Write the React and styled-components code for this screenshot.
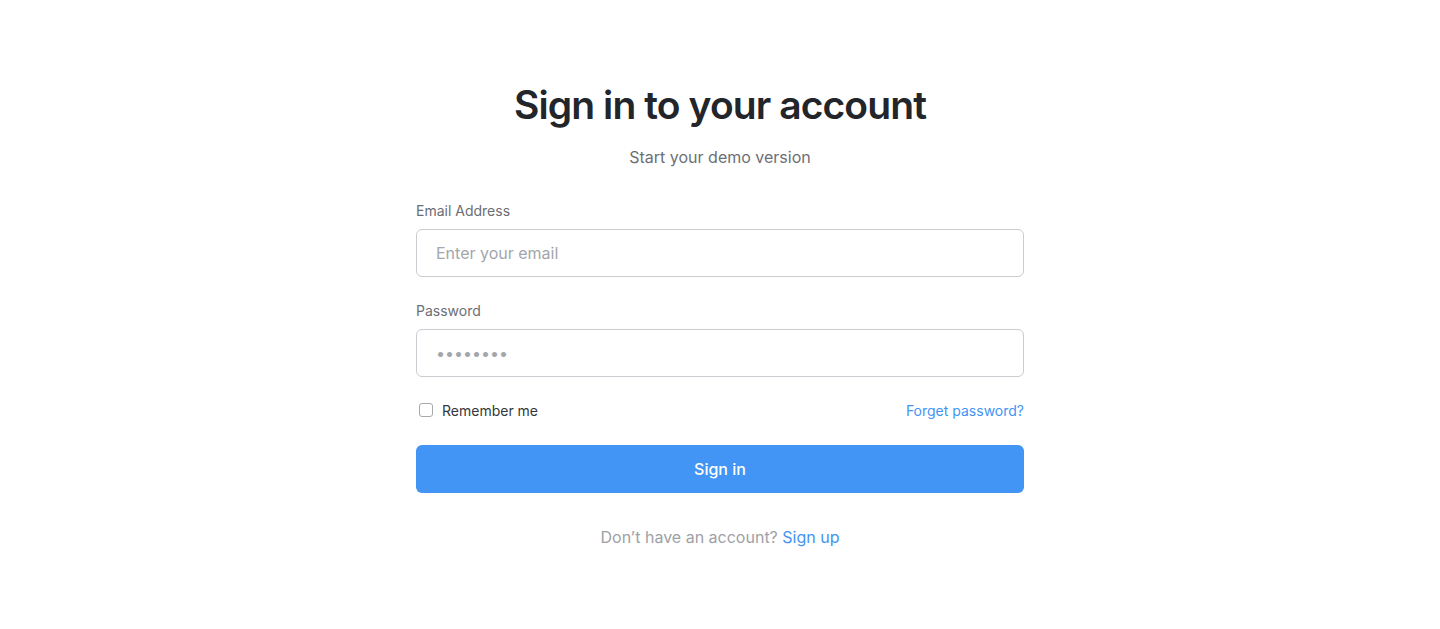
import React from 'react';
import styled, { createGlobalStyle } from 'styled-components';

const GlobalStyle = createGlobalStyle`
    body {
        margin: 0;
        background: #ffffff;
        font-family: Inter, "Noto Sans", sans-serif;
        -webkit-font-smoothing: antialiased;
    }
`

const Page = styled.main`
    display: flex;
    justify-content: center;
    padding-top: 81px;
`

const Card = styled.div`
    width: 608px;
    display: flex;
    flex-direction: column;
`

const Title = styled.h1`
    margin: 0;
    text-align: center;
    font-size: 39px;
    line-height: 48px;
    font-weight: 600;
    letter-spacing: -0.9px;
    color: #222529;
`

const Subtitle = styled.p`
    margin: 16px 0 0;
    text-align: center;
    font-size: 16px;
    line-height: 24px;
    color: #6c6f75;
`

const Form = styled.form`
    display: flex;
    flex-direction: column;
    margin-top: 32px;
`

const Field = styled.div`
    display: flex;
    flex-direction: column;
    gap: 8px;
    margin-bottom: ${props => props.last ? '23px' : '24px'};
`

const Label = styled.label`
    font-size: 14px;
    line-height: 20px;
    color: #6b6e74;
`

const Input = styled.input`
    box-sizing: border-box;
    height: 48px;
    width: 100%;
    padding: 0 19px;
    border: 1px solid #c9ccd1;
    border-radius: 6px;
    font-family: inherit;
    font-size: 16px;
    color: ${props => props.type === 'password' ? '#a3a6ab' : '#212529'};
    outline: none;
    &::placeholder {
        color: #a3a6ab;
    }
`

const OptionsRow = styled.div`
    display: flex;
    justify-content: space-between;
    align-items: center;
    height: 20px;
`

const CheckLabel = styled.label`
    display: flex;
    align-items: center;
    gap: 9px;
    font-size: 14px;
    color: #34373c;
    padding-left: 3px;
`

const Box = styled.span`
    box-sizing: border-box;
    width: 14px;
    height: 14px;
    border: 1px solid #a6a9ae;
    border-radius: 3px;
    background: #fff;
`

const LinkText = styled.a`
    color: #4294f4;
    font-size: ${props => props.size || '14px'};
    text-decoration: none;
    cursor: pointer;
`

const Button = styled.button`
    margin-top: 25px;
    height: 48px;
    border: none;
    border-radius: 6px;
    background: #4294f5;
    color: #ffffff;
    font-family: inherit;
    font-size: 16px;
    font-weight: 500;
    cursor: pointer;
`

const Footer = styled.p`
    margin: 32px 0 0;
    text-align: center;
    font-size: 16px;
    line-height: 24px;
    color: #9ea1a6;
`

export default function App(){
    return (
        <>
            <GlobalStyle />
            <Page>
                <Card>
                    <Title>Sign in to your account</Title>
                    <Subtitle>Start your demo version</Subtitle>
                    <Form onSubmit={e => e.preventDefault()}>
                        <Field>
                            <Label htmlFor="email">Email Address</Label>
                            <Input id="email" type="email" placeholder="Enter your email" />
                        </Field>
                        <Field last>
                            <Label htmlFor="password">Password</Label>
                            <Input id="password" type="password" defaultValue="password" readOnly />
                        </Field>
                        <OptionsRow>
                            <CheckLabel>
                                <Box />
                                Remember me
                            </CheckLabel>
                            <LinkText>Forget password?</LinkText>
                        </OptionsRow>
                        <Button type="submit">Sign in</Button>
                    </Form>
                    <Footer>
                        Don’t have an account? <LinkText size="16px">Sign up</LinkText>
                    </Footer>
                </Card>
            </Page>
        </>
    )
}
